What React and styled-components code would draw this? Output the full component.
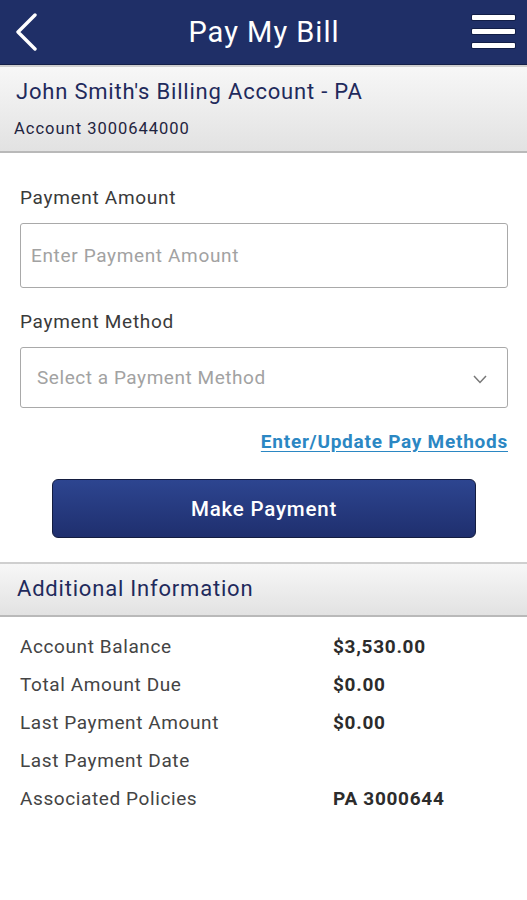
import React from "react";
import styled, { createGlobalStyle } from "styled-components";

const GlobalStyle = createGlobalStyle`
  html, body {
    margin: 0;
    padding: 0;
    background: #ffffff;
    font-family: Roboto, "Noto Sans", "Liberation Sans", sans-serif;
  }
  * { box-sizing: border-box; }
`;

const details = [
  { label: "Account Balance", value: "$3,530.00" },
  { label: "Total Amount Due", value: "$0.00" },
  { label: "Last Payment Amount", value: "$0.00" },
  { label: "Last Payment Date", value: "" },
  { label: "Associated Policies", value: "PA 3000644" },
];

const App = () => {
  return (
    <Page>
      <GlobalStyle />
      <TopBar>
        <IconButton aria-label="back">
          <svg width="26" height="38" viewBox="0 0 26 38">
            <polyline
              points="22,2 5,19 22,36"
              fill="none"
              stroke="#ffffff"
              strokeWidth="3.4"
              strokeLinecap="round"
              strokeLinejoin="round"
            />
          </svg>
        </IconButton>
        <Title>Pay My Bill</Title>
        <MenuButton aria-label="menu">
          <MenuLine />
          <MenuLine />
          <MenuLine />
        </MenuButton>
      </TopBar>

      <SectionHead $tall>
        <SectionTitle>John Smith's Billing Account - PA</SectionTitle>
        <AccountNo>Account 3000644000</AccountNo>
      </SectionHead>

      <Form>
        <Label>Payment Amount</Label>
        <Field placeholder="Enter Payment Amount" />
        <Label $gap>Payment Method</Label>
        <Select>
          <span>Select a Payment Method</span>
          <svg width="14" height="9" viewBox="0 0 14 9">
            <polyline
              points="1,1 7,7.5 13,1"
              fill="none"
              stroke="#777"
              strokeWidth="1.5"
            />
          </svg>
        </Select>
        <LinkRow>
          <MethodsLink href="#">Enter/Update Pay Methods</MethodsLink>
        </LinkRow>
        <PayButton>Make Payment</PayButton>
      </Form>

      <SectionHead>
        <SectionTitle>Additional Information</SectionTitle>
      </SectionHead>

      <InfoList>
        {details.map((row) => (
          <InfoRow key={row.label}>
            <InfoLabel>{row.label}</InfoLabel>
            <InfoValue>{row.value}</InfoValue>
          </InfoRow>
        ))}
      </InfoList>
    </Page>
  );
};

export default App;

const Page = styled.div`
  width: 527px;
  min-height: 900px;
  background: #fff;
`;

const TopBar = styled.header`
  height: 65px;
  background: #1f2f67;
  display: flex;
  align-items: center;
  justify-content: space-between;
  padding: 0 12px 0 13px;
  border-bottom: 1px solid #141f48;
`;

const IconButton = styled.div`
  display: flex;
  align-items: center;
  width: 43px;
  height: 40px;
`;

const Title = styled.h1`
  margin: 0;
  color: #fff;
  font-size: 29px;
  font-weight: 400;
  letter-spacing: 1px;
`;

const MenuButton = styled.div`
  display: flex;
  flex-direction: column;
  gap: 9px;
  width: 43px;
  margin-top: -2px;
`;

const MenuLine = styled.span`
  display: block;
  height: 5px;
  background: #fff;
  border-radius: 1px;
  box-shadow: 0 0 0 1px rgba(10, 20, 50, 0.6);
`;

const SectionHead = styled.div`
  background: linear-gradient(#f7f7f7, #e2e2e2);
  border-top: 2px solid #cfcfcf;
  border-bottom: 2px solid #b9b9b9;
  padding: ${(p) => (p.$tall ? "11px 14px 12px 16px" : "11px 17px 12px")};
  height: ${(p) => (p.$tall ? "88px" : "55px")};
`;

const SectionTitle = styled.div`
  color: #1f2a5c;
  font-size: 22px;
  line-height: 28px;
  letter-spacing: 0.8px;
`;

const AccountNo = styled.div`
  color: #1f2440;
  font-size: 16.5px;
  margin-top: 13px;
  margin-left: -2px;
  letter-spacing: 1px;
`;

const Form = styled.div`
  padding: 34px 19px 24px 20px;
  display: flex;
  flex-direction: column;
`;

const Label = styled.div`
  color: #3a3a3a;
  font-size: 19px;
  line-height: 22px;
  letter-spacing: 0.7px;
  margin-top: ${(p) => (p.$gap ? "23px" : "0")};
  margin-bottom: 14px;
`;

const Field = styled.input`
  height: 65px;
  width: 100%;
  border: 1.5px solid #a9a9a9;
  border-radius: 3px;
  padding: 0 10px;
  font-family: inherit;
  font-size: 19px;
  letter-spacing: 0.65px;
  color: #333;
  outline: none;
  &::placeholder {
    color: #a2a2a2;
  }
`;

const Select = styled.div`
  height: 61px;
  border: 1.5px solid #a9a9a9;
  border-radius: 3px;
  display: flex;
  align-items: center;
  justify-content: space-between;
  padding: 0 20px 0 16px;
  font-size: 19px;
  letter-spacing: 0.55px;
  color: #a2a2a2;
  svg {
    margin-top: 4px;
  }
`;

const LinkRow = styled.div`
  display: flex;
  justify-content: flex-end;
  margin-top: 23px;
  line-height: 22px;
`;

const MethodsLink = styled.a`
  color: #2b87c3;
  font-size: 19px;
  font-weight: 700;
  letter-spacing: 0.75px;
  text-decoration: underline;
  text-underline-offset: 3px;
`;

const PayButton = styled.button`
  align-self: center;
  width: 424px;
  height: 59px;
  margin-top: 26px;
  border: 1px solid #141d40;
  border-radius: 6px;
  background: linear-gradient(#2d4590, #1f2f6e);
  color: #fff;
  font-family: inherit;
  font-size: 20.5px;
  font-weight: 500;
  letter-spacing: 0.8px;
`;

const InfoList = styled.div`
  padding: 10px 20px;
  display: flex;
  flex-direction: column;
`;

const InfoRow = styled.div`
  display: grid;
  grid-template-columns: 313px 1fr;
  height: 38px;
  align-items: center;
`;

const InfoLabel = styled.div`
  color: #444;
  font-size: 19px;
  letter-spacing: 0.6px;
`;

const InfoValue = styled.div`
  color: #2c2c2c;
  font-size: 19px;
  font-weight: 700;
  letter-spacing: 0.7px;
`;
